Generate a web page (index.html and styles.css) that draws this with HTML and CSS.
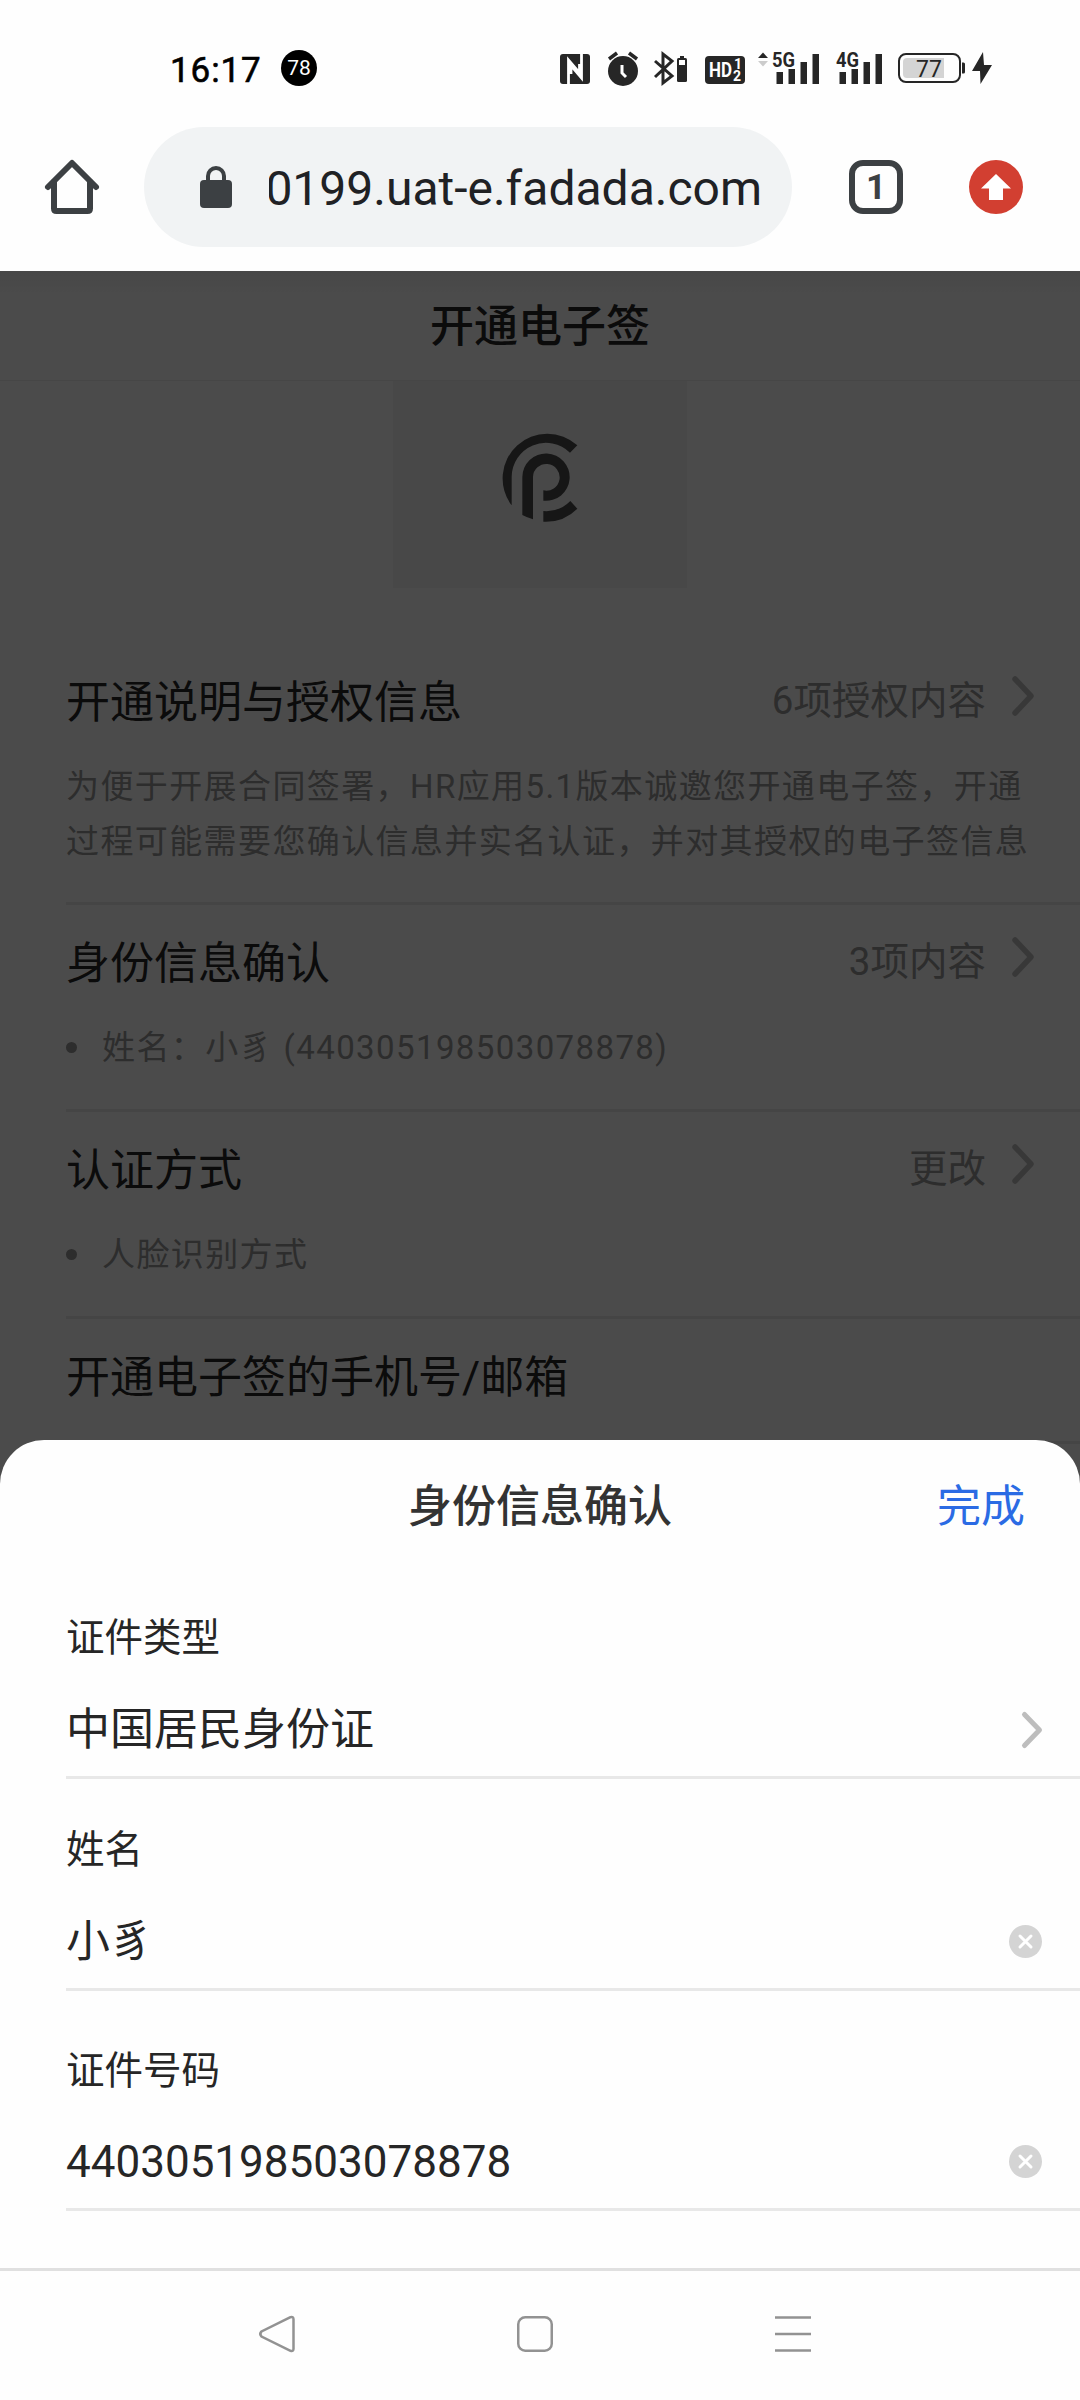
FILE: index.html
```html
<!DOCTYPE html>
<html lang="zh-CN">
<head>
<meta charset="UTF-8">
<title>开通电子签</title>
<link rel="stylesheet" href="styles.css">
</head>
<body>
	<div class="statusBar">
		<span class="time">16:17</span>
		<span class="notice">78</span>
		<div class="statusIcons">
			<svg class="nfc" width="30" height="36" viewBox="0 0 30 36">
				<rect y="4" width="30" height="30" rx="3" fill="#262626"/>
				<path d="M8.500 34V10l11 13V14M21.500 4v24L11 15.500V24" fill="none" stroke="#fff" stroke-width="2.800"/>
			</svg>
			<svg class="alarm" width="32" height="36" viewBox="0 0 32 36">
				<circle cx="16" cy="21" r="15" fill="#262626"/>
				<path d="M2 9l8-6M30 9l-8-6" stroke="#262626" stroke-width="3.500"/>
				<path d="M15 15v8l4 4" fill="none" stroke="#fff" stroke-width="3"/>
			</svg>
			<svg class="bluetooth" width="34" height="36" viewBox="0 0 34 36">
				<path d="M2 11l17 15-9 7V4l9 7L2 27" fill="none" stroke="#262626" stroke-width="3"/>
				<path d="M27 6h4v2h-4z" fill="#262626"/>
				<rect x="24" y="8" width="10" height="24" rx="1.500" fill="#262626"/>
				<rect x="26" y="10" width="6" height="5" fill="#fff"/>
			</svg>
			<svg class="hd" width="40" height="36" viewBox="0 0 40 36">
				<rect y="6" width="40" height="28" rx="4" fill="#262626"/>
				<text x="4" y="27" font-size="20" textLength="23" lengthAdjust="spacingAndGlyphs" fill="#fff">HD</text>
				<text x="29" y="19" font-size="14" fill="#fff">1</text>
				<text x="28" y="31" font-size="14" fill="#fff">2</text>
			</svg>
			<svg class="signal5g" width="61" height="36" viewBox="0 0 61 36">
				<path d="M0 8l5-5.500L10 8z" fill="#262626"/>
				<path d="M0 11h10l-5 5.500z" fill="#ccc"/>
				<text x="14" y="17" font-size="20" textLength="23" lengthAdjust="spacingAndGlyphs" fill="#262626">5G</text>
				<path d="M18.500 22h6.500v12h-6.500zM30.500 19h6.500v15h-6.500zM42.500 12h6.500v22h-6.500zM54.500 4h6.500v30h-6.500z" fill="#262626"/>
			</svg>
			<svg class="signal4g" width="46" height="36" viewBox="0 0 46 36">
				<text x="0" y="17" font-size="20" textLength="23" lengthAdjust="spacingAndGlyphs" fill="#262626">4G</text>
				<path d="M3.500 22h6.500v12h-6.500zM15.500 19h6.500v15h-6.500zM27.500 12h6.500v22h-6.500zM39.500 4h6.500v30h-6.500z" fill="#262626"/>
			</svg>
			<svg class="battery" width="67" height="36" viewBox="0 0 67 36">
				<rect x="1" y="4" width="61" height="28" rx="7" fill="none" stroke="#262626" stroke-width="2"/>
				<path d="M9 8h37v20H9a4 4 0 0 1-4-4V12a4 4 0 0 1 4-4z" fill="#d4d4d4"/>
				<path d="M64 12.500h1.500a1.500 1.500 0 0 1 1.500 1.500v8a1.500 1.500 0 0 1-1.500 1.500H64z" fill="#262626"/>
				<text class="level" x="31" y="26.500" font-size="23" text-anchor="middle" fill="#262626">77</text>
			</svg>
			<svg class="bolt" width="20" height="36" viewBox="0 0 20 36">
				<path d="M11 2L0 21h8L8.500 34 20 15h-8z" fill="#262626"/>
			</svg>
		</div>
	</div>

	<div class="browserBar">
		<svg class="home" width="54" height="54" viewBox="0 0 54 54" fill="none" stroke="#3c4043" stroke-width="6" stroke-linecap="round">
			<path d="M3 27L27 3l24 24" stroke-linejoin="round"/>
			<path d="M9 22v26.500q0 2.500 2.500 2.500h31q2.500 0 2.500-2.500V22"/>
		</svg>
		<div class="urlBox">
			<svg width="32" height="42" viewBox="0 0 32 42">
				<path d="M8 17V10a8 8 0 0 1 16 0v7" fill="none" stroke="#3c4043" stroke-width="4"/>
				<rect y="14" width="32" height="28" rx="4" fill="#3c4043"/>
			</svg>
			<div class="url"><span>0199.uat-e.fadada.com</span></div>
		</div>
		<div class="tabs">1</div>
		<svg class="update" width="54" height="54" viewBox="0 0 54 54">
			<circle cx="27" cy="27" r="27" fill="#d23f31"/>
			<path d="M27 14l15 14.500h-8V40H20V28.500h-8z" fill="#fff"/>
		</svg>
	</div>

	<div class="content">
		<div class="page">
			<div class="pageHeader">开通电子签</div>
			<div class="logoBox">
				<svg width="77" height="90" viewBox="365 458 231 270" fill="#4a4a4a">
					<path d="M594 498A134 134 0 0 0 397 678V593A103 103 0 0 1 572 520Z"/>
					<path d="M429 707V593A71 71 0 1 1 492 664V633A40 40 0 1 0 461 593V720Q444 715 429 707Z"/>
					<path d="M492 727V695A102 102 0 0 0 573 665L594 688A134 134 0 0 1 492 727Z"/>
				</svg>
			</div>

			<div class="cell intro">
				<div class="cellHead">
					<h2>开通说明与授权信息</h2>
					<span class="more">6项授权内容</span>
					<svg class="arrow" width="22" height="40" viewBox="0 0 22 40"><path d="M3 3l16 17L3 37"/></svg>
				</div>
				<p>为便于开展合同签署&#xFF0C;HR应用5.1版本诚邀您开通电子签&#xFF0C;开通<br>过程可能需要您确认信息并实名认证&#xFF0C;并对其授权的电子签信息</p>
			</div>
			<div class="cell">
				<div class="cellHead">
					<h2>身份信息确认</h2>
					<span class="more">3项内容</span>
					<svg class="arrow" width="22" height="40" viewBox="0 0 22 40"><path d="M3 3l16 17L3 37"/></svg>
				</div>
				<p class="dot">姓名&#xFF1A;小豸 (440305198503078878)</p>
			</div>
			<div class="cell">
				<div class="cellHead">
					<h2>认证方式</h2>
					<span class="more">更改</span>
					<svg class="arrow" width="22" height="40" viewBox="0 0 22 40"><path d="M3 3l16 17L3 37"/></svg>
				</div>
				<p class="dot">人脸识别方式</p>
			</div>
			<div class="cell">
				<div class="cellHead">
					<h2>开通电子签的手机号/邮箱</h2>
				</div>
			</div>
		</div>
		<div class="mask"></div>

		<div class="sheet">
			<div class="sheetHeader">
				<h3>身份信息确认</h3>
				<a class="done">完成</a>
			</div>
			<div class="field idType">
				<label>证件类型</label>
				<div class="value">
					<span>中国居民身份证</span>
					<svg width="20" height="36" viewBox="0 0 20 36"><path d="M2.500 2.500L17.500 18l-15 15.500" fill="none" stroke="#bdbdbd" stroke-width="5" stroke-linecap="round" stroke-linejoin="round"/></svg>
				</div>
			</div>
			<div class="field userName">
				<label>姓名</label>
				<div class="value">
					<span>小豸</span>
					<svg width="33" height="33" viewBox="0 0 33 33"><circle cx="16.500" cy="16.500" r="16.500" fill="#d4d4d4"/><path d="M11 11l11 11m0-11l-11 11" stroke="#fff" stroke-width="3" stroke-linecap="round"/></svg>
				</div>
			</div>
			<div class="field idNumber">
				<label>证件号码</label>
				<div class="value">
					<span>440305198503078878</span>
					<svg width="33" height="33" viewBox="0 0 33 33"><circle cx="16.500" cy="16.500" r="16.500" fill="#d4d4d4"/><path d="M11 11l11 11m0-11l-11 11" stroke="#fff" stroke-width="3" stroke-linecap="round"/></svg>
				</div>
			</div>
		</div>
	</div>

	<div class="navBar">
		<svg width="36" height="38" viewBox="0 0 36 38"><path d="M31.500 2.200L2.500 16.500q-2.500 2.500 0 5L31.500 35.800q3 1 3-2V4.200q0-3-3-2z"/></svg>
		<svg width="36" height="38" viewBox="0 0 36 38"><rect x="1.250" y="2.250" width="33.500" height="33.500" rx="7"/></svg>
		<svg width="36" height="38" viewBox="0 0 36 38"><path d="M0 2.500h36M0 19h36M0 35.500h36"/></svg>
	</div>
</body>
</html>
```

FILE: styles.css
```css
* {
	box-sizing: border-box;
}

body {
	margin: 0;
	width: 1080px;
	height: 2400px;
	overflow: hidden;
	display: flex;
	flex-direction: column;
	background: #fefefe;
	color: #262626;
	font-family: Roboto, "Noto Sans CJK SC", sans-serif;
}

h2, h3, p {
	margin: 0;
	font-weight: normal;
}

svg {
	display: block;
	flex: none;
	overflow: visible;
}

/* phone status bar */
.statusBar {
	height: 127px;
	padding: 50px 88px 0 170px;
	display: flex;
	align-items: flex-start;
}

.time {
	width: 111px;
	padding-top: 1px;
	font-size: 35px;
	line-height: 40px;
	letter-spacing: 0.9px;
	color: #000;
	-webkit-text-stroke: 0.6px #000;
}

.notice {
	width: 36px;
	height: 36px;
	border-radius: 50%;
	background: #000;
	color: #fff;
	font-size: 21px;
	line-height: 36px;
	text-align: center;
}

.statusIcons {
	margin-left: auto;
	display: flex;
}

.statusIcons text {
	font-weight: bold;
}

.statusIcons .level {
	font-weight: normal;
}

.alarm, .signal4g {
	margin-left: 17px;
}

.bluetooth {
	margin-left: 14px;
}

.hd {
	margin-left: 18px;
}

.signal5g {
	margin-left: 13px;
}

.battery {
	margin-left: 16px;
}

.bolt {
	margin-left: 7px;
}

/* browser toolbar */
.browserBar {
	height: 144px;
	padding: 0 57px 24px 45px;
	display: flex;
	align-items: center;
}

.urlBox {
	width: 648px;
	height: 120px;
	margin-left: 45px;
	padding: 0 30px 0 56px;
	border-radius: 60px;
	background: #f1f3f4;
	display: flex;
	align-items: center;
}

.url {
	width: 493px;
	margin-left: 37px;
	padding-top: 3px;
	overflow: hidden;
	display: flex;
	justify-content: flex-end;
	font-size: 48px;
	line-height: 60px;
	white-space: nowrap;
	color: #202124;
}

.tabs {
	width: 54px;
	height: 54px;
	margin-left: 57px;
	border: 6px solid #3c4043;
	border-radius: 14px;
	color: #3c4043;
	font-size: 35px;
	font-weight: bold;
	line-height: 43px;
	text-align: center;
}

.update {
	margin-left: 66px;
}

/* page under the mask */
.content {
	position: relative;
	height: 1997px;
	overflow: hidden;
}

.mask {
	position: absolute;
	top: 0;
	right: 0;
	bottom: 0;
	left: 0;
	background: linear-gradient(rgba(0, 0, 0, 0.06), transparent 24px), rgba(0, 0, 0, 0.7);
}

.page {
	height: 100%;
	background: #fcfcfc;
}

.pageHeader {
	height: 110px;
	padding-top: 2px;
	border-bottom: 1px solid #eaeaea;
	font-size: 44px;
	font-weight: 500;
	line-height: 109px;
	text-align: center;
}

.logoBox {
	width: 294px;
	height: 207px;
	margin: 0 auto 56px;
	padding: 51px 0 0 108px;
	background: #f0f0f0;
}

.cell {
	margin-left: 66px;
	padding: 28px 0 34px;
	border-bottom: 3px solid #e8e8e8;
}

.intro {
	padding-bottom: 33px;
}

.cellHead {
	height: 60px;
	padding-right: 46px;
	display: flex;
	align-items: center;
}

.cellHead h2 {
	flex: 1;
	padding-top: 1px;
	font-size: 44px;
	line-height: 60px;
}

.more {
	padding-bottom: 4px;
	font-size: 38.5px;
	line-height: 55px;
	color: #969696;
}

.arrow {
	margin: 0 0 12px 26px;
	fill: none;
	stroke: #bdbdbd;
	stroke-width: 5.5;
	stroke-linecap: round;
	stroke-linejoin: round;
}

.cell p {
	margin-top: 27px;
	font-size: 33px;
	line-height: 55px;
	letter-spacing: 1.4px;
	white-space: nowrap;
	color: #969696;
}

.dot {
	display: flex;
	align-items: center;
}

.dot::before {
	content: "";
	width: 11px;
	height: 11px;
	margin-right: 25px;
	border-radius: 50%;
	background: #969696;
}

/* bottom sheet */
.sheet {
	position: absolute;
	right: 0;
	bottom: 0;
	left: 0;
	height: 828px;
	border-radius: 44px 44px 0 0;
	background: #fefefe;
}

.sheetHeader {
	height: 136px;
	padding: 0 55px;
	display: grid;
	grid-template-columns: 1fr auto 1fr;
	font-size: 44px;
	line-height: 135px;
}

.sheetHeader h3 {
	grid-column: 2;
	font-size: 44px;
	font-weight: 500;
	color: #333;
}

.done {
	text-align: right;
	color: #2b6be4;
}

.field {
	margin-left: 66px;
	display: flex;
	flex-direction: column;
	justify-content: flex-end;
	border-bottom: 3px solid #e8e8e8;
}

.idType {
	height: 203px;
}

.userName {
	height: 212px;
}

.idNumber {
	height: 220px;
}

.field label {
	margin-bottom: 21px;
	font-size: 38.5px;
	line-height: 54px;
}

.idNumber label {
	margin-bottom: 20px;
}

.value {
	height: 90px;
	padding-right: 38px;
	display: flex;
	align-items: center;
	justify-content: space-between;
	font-size: 44px;
	line-height: 88px;
}

.value span {
	padding-bottom: 2px;
}

.value svg {
	margin-bottom: 3px;
}

/* system navigation */
.navBar {
	height: 132px;
	padding: 0 10px 3px 0;
	border-top: 3px solid #e0e0e0;
	display: flex;
	align-items: center;
	justify-content: center;
	gap: 222px;
}

.navBar svg {
	fill: none;
	stroke: #929292;
	stroke-width: 2.5;
}
```
